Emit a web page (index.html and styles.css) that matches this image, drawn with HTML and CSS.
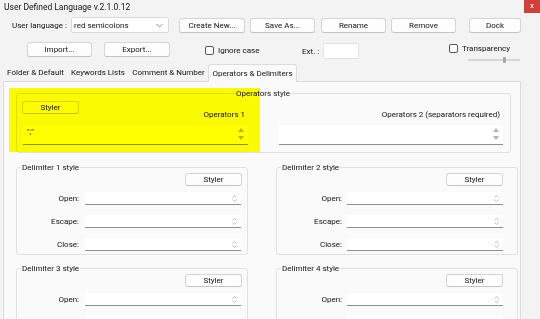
FILE: index.html
```html
<!DOCTYPE html>
<html lang="en">
<head>
    <meta charset="UTF-8">
    <meta name="viewport" content="width=device-width, initial-scale=1.0">
    <title>User Defined Language</title>
    <link rel="stylesheet" href="styles.css">
</head>
<body>
    <div class="window">
        <div class="titlebar">
            <span class="title">User Defined Language v.2.1.0.12</span>
            <span class="close">x</span>
        </div>

        <div class="row row-top">
            <span class="lang-label">User language :</span>
            <div class="select">
                <span>red semicolons</span>
                <svg width="7" height="5" viewBox="0 0 7 5"><polyline points="0.5,1 3.5,4 6.5,1" fill="none" stroke="#777" stroke-width="0.8"/></svg>
            </div>
            <button class="btn btn-create">Create New...</button>
            <button class="btn btn-save">Save As...</button>
            <button class="btn btn-rename">Rename</button>
            <button class="btn btn-remove">Remove</button>
            <button class="btn btn-dock">Dock</button>
        </div>

        <div class="row row-second">
            <button class="btn btn-import">Import...</button>
            <button class="btn btn-export">Export...</button>
            <label class="check ignore-case"><span class="box"></span>Ignore case</label>
            <span class="ext-label">Ext. :</span>
            <span class="ext-input"></span>
            <div class="transparency">
                <label class="check"><span class="box"></span>Transparency</label>
                <div class="slider"><span class="thumb"></span></div>
            </div>
        </div>

        <div class="tabs">
            <span class="tab tab-1">Folder &amp; Default</span>
            <span class="tab tab-2">Keywords Lists</span>
            <span class="tab tab-3">Comment &amp; Number</span>
            <span class="tab tab-4 active">Operators &amp; Delimiters</span>
        </div>

        <div class="panel">
            <div class="group ops">
                <div class="highlight"></div>
                <div class="group-title center"><span>Operators style</span></div>
                <div class="ops-cols">
                    <div class="ops-col">
                        <div class="ops-head">
                            <button class="btn btn-styler">Styler</button>
                            <span>Operators 1</span>
                        </div>
                        <div class="textarea">
                            <span class="value">";"</span>
                            <span class="spin"><i class="up"></i><i class="down"></i></span>
                        </div>
                    </div>
                    <div class="ops-col">
                        <div class="ops-head">
                            <span></span>
                            <span>Operators 2 (separators required)</span>
                        </div>
                        <div class="textarea">
                            <span class="value"></span>
                            <span class="spin"><i class="up"></i><i class="down"></i></span>
                        </div>
                    </div>
                </div>
            </div>

            <div class="delims">
                <div class="group delim">
                    <div class="delim-head">
                        <span class="delim-title">Delimiter 1 style</span>
                        <button class="btn btn-styler">Styler</button>
                    </div>
                    <div class="field"><span class="field-label">Open:</span><span class="input"><svg class="mini-spin" width="5" height="7" viewBox="0 0 5 7"><path d="M0.5 2.5 L2.5 0.5 L4.5 2.5 M0.5 4.5 L2.5 6.5 L4.5 4.5" fill="none" stroke="#b8b8b8" stroke-width="0.9"/></svg></span></div>
                    <div class="field"><span class="field-label">Escape:</span><span class="input"><svg class="mini-spin" width="5" height="7" viewBox="0 0 5 7"><path d="M0.5 2.5 L2.5 0.5 L4.5 2.5 M0.5 4.5 L2.5 6.5 L4.5 4.5" fill="none" stroke="#b8b8b8" stroke-width="0.9"/></svg></span></div>
                    <div class="field"><span class="field-label">Close:</span><span class="input"><svg class="mini-spin" width="5" height="7" viewBox="0 0 5 7"><path d="M0.5 2.5 L2.5 0.5 L4.5 2.5 M0.5 4.5 L2.5 6.5 L4.5 4.5" fill="none" stroke="#b8b8b8" stroke-width="0.9"/></svg></span></div>
                </div>
                <div class="group delim">
                    <div class="delim-head">
                        <span class="delim-title">Delimiter 2 style</span>
                        <button class="btn btn-styler">Styler</button>
                    </div>
                    <div class="field"><span class="field-label">Open:</span><span class="input"><svg class="mini-spin" width="5" height="7" viewBox="0 0 5 7"><path d="M0.5 2.5 L2.5 0.5 L4.5 2.5 M0.5 4.5 L2.5 6.5 L4.5 4.5" fill="none" stroke="#b8b8b8" stroke-width="0.9"/></svg></span></div>
                    <div class="field"><span class="field-label">Escape:</span><span class="input"><svg class="mini-spin" width="5" height="7" viewBox="0 0 5 7"><path d="M0.5 2.5 L2.5 0.5 L4.5 2.5 M0.5 4.5 L2.5 6.5 L4.5 4.5" fill="none" stroke="#b8b8b8" stroke-width="0.9"/></svg></span></div>
                    <div class="field"><span class="field-label">Close:</span><span class="input"><svg class="mini-spin" width="5" height="7" viewBox="0 0 5 7"><path d="M0.5 2.5 L2.5 0.5 L4.5 2.5 M0.5 4.5 L2.5 6.5 L4.5 4.5" fill="none" stroke="#b8b8b8" stroke-width="0.9"/></svg></span></div>
                </div>
                <div class="group delim">
                    <div class="delim-head">
                        <span class="delim-title">Delimiter 3 style</span>
                        <button class="btn btn-styler">Styler</button>
                    </div>
                    <div class="field"><span class="field-label">Open:</span><span class="input"><svg class="mini-spin" width="5" height="7" viewBox="0 0 5 7"><path d="M0.5 2.5 L2.5 0.5 L4.5 2.5 M0.5 4.5 L2.5 6.5 L4.5 4.5" fill="none" stroke="#b8b8b8" stroke-width="0.9"/></svg></span></div>
                    <div class="field"><span class="field-label" aria-label="Escape:"></span><span class="input"></span></div>
                </div>
                <div class="group delim">
                    <div class="delim-head">
                        <span class="delim-title">Delimiter 4 style</span>
                        <button class="btn btn-styler">Styler</button>
                    </div>
                    <div class="field"><span class="field-label">Open:</span><span class="input"><svg class="mini-spin" width="5" height="7" viewBox="0 0 5 7"><path d="M0.5 2.5 L2.5 0.5 L4.5 2.5 M0.5 4.5 L2.5 6.5 L4.5 4.5" fill="none" stroke="#b8b8b8" stroke-width="0.9"/></svg></span></div>
                    <div class="field"><span class="field-label" aria-label="Escape:"></span><span class="input"></span></div>
                </div>
            </div>
        </div>
    </div>
</body>
</html>
```

FILE: styles.css
```css
* {
    margin: 0;
    padding: 0;
    box-sizing: border-box;
    font-family: Roboto, "Noto Sans", sans-serif;
}
body {
    background: #f3f3f3;
    color: #111;
    font-size: 8px;
    overflow: hidden;
}
.window {
    width: 540px;
    height: 319px;
    overflow: hidden;
}
.titlebar {
    display: flex;
    justify-content: space-between;
    height: 14px;
    line-height: 14px;
}
.title {
    padding-left: 4px;
    font-size: 8.5px;
}
.close {
    width: 16px;
    height: 13px;
    line-height: 12px;
    background: #d0403a;
    color: #fff;
    text-align: center;
    font-size: 8px;
}
.row {
    display: flex;
}
.row-top {
    margin-top: 3px;
    height: 16px;
    padding-left: 12px;
    align-items: center;
}
.lang-label {
    width: 59px;
}
.select {
    width: 98px;
    height: 16px;
    background: #fff;
    border: 1px solid #dadada;
    border-radius: 2px;
    display: flex;
    justify-content: space-between;
    align-items: center;
    padding: 0 5px 0 2px;
}
.btn {
    height: 15px;
    background: #fdfdfd;
    border: 1px solid #d5d5d5;
    border-bottom-color: #c4c4c4;
    border-radius: 3px;
    font-size: 8px;
    color: #111;
    text-align: center;
}
.btn-create { width: 66px; margin-left: 10px; }
.btn-save { width: 65px; margin-left: 5px; }
.btn-rename { width: 65px; margin-left: 6px; }
.btn-remove { width: 65px; margin-left: 5px; }
.btn-dock { width: 52px; margin-left: 13px; }

.row-second {
    margin-top: 9px;
    height: 22px;
    align-items: flex-start;
}
.btn-import { width: 65px; margin-left: 27px; }
.btn-export { width: 66px; margin-left: 12px; }
.check {
    display: flex;
    align-items: center;
}
.check .box {
    width: 9px;
    height: 9px;
    border: 1px solid #555;
    border-radius: 2px;
    background: #fff;
    margin-right: 4px;
}
.ignore-case {
    width: 97px;
    height: 15px;
    margin-left: 35px;
    margin-top: 1px;
}
.ext-label {
    width: 21px;
    line-height: 17px;
    margin-top: 1px;
}
.ext-input {
    width: 36px;
    height: 16px;
    margin-top: 1px;
    background: #fff;
    border: 1px solid #e2e2e2;
    border-radius: 2px;
}
.transparency {
    margin-left: 90px;
    margin-top: 1px;
}
.transparency .check {
    height: 10px;
}
.slider {
    position: relative;
    width: 52px;
    height: 6px;
    margin: 4px 0 0 19px;
}
.slider::before {
    content: "";
    position: absolute;
    left: 0;
    right: 0;
    top: 2px;
    height: 2px;
    background: #d6d6d6;
}
.slider .thumb {
    position: absolute;
    left: 35px;
    top: 0;
    width: 3px;
    height: 6px;
    background: #a8a8a8;
    border-radius: 1px;
}

.tabs {
    display: flex;
    align-items: flex-end;
    height: 17px;
    padding-left: 4px;
}
.tab {
    height: 16px;
    line-height: 16px;
    text-align: center;
    white-space: nowrap;
}
.tab-1 { width: 63px; }
.tab-2 { width: 62px; }
.tab-3 { width: 79px; }
.tab-4 { width: 89px; }
.tab.active {
    position: relative;
    z-index: 1;
    height: 18px;
    line-height: 17px;
    margin-bottom: -1px;
    background: #fafafa;
    border: 1px solid #dcdcdc;
    border-bottom: none;
    border-radius: 3px 3px 0 0;
}

.panel {
    width: 518px;
    height: 250px;
    margin-left: 3px;
    background: #fafafa;
    border: 1px solid #dcdcdc;
    padding: 11px 0 0 12px;
}
.group {
    border: 1px solid #e1e1e1;
    border-radius: 3px;
}
.group-title span,
.delim-title {
    display: inline-block;
    background: #fafafa;
    line-height: 11px;
    padding: 0 1px;
}
.group-title {
    margin-top: -6px;
    height: 11px;
}
.group-title.center {
    text-align: center;
}

/* Operators style */
.ops {
    position: relative;
    width: 495px;
    height: 60px;
    padding: 0 7px 0 6px;
}
.highlight {
    position: absolute;
    left: -8px;
    top: -6px;
    width: 251px;
    height: 64px;
    background: #ffff00;
    mix-blend-mode: multiply;
    z-index: 2;
}
.ops-cols {
    display: flex;
    gap: 31px;
}
.ops-col:first-child {
    width: 225px;
}
.ops-col:last-child {
    width: 224px;
}
.ops-head {
    display: flex;
    justify-content: space-between;
    align-items: flex-end;
    height: 21px;
    padding-right: 3px;
}
.ops-head span {
    line-height: 10px;
}
.btn-styler {
    width: 57px;
    height: 13px;
    line-height: 11px;
}
.ops-head .btn-styler {
    margin-left: -1px;
    margin-bottom: 6px;
}
.textarea {
    display: flex;
    justify-content: space-between;
    height: 20px;
    margin-top: 5px;
    background: #fff;
    border-bottom: 1px solid #8f8f8f;
    padding: 2px 4px 0 4px;
}
.textarea .value {
    line-height: 10px;
}
.spin {
    display: flex;
    flex-direction: column;
    gap: 4px;
    padding-top: 1px;
}
.spin i {
    width: 0;
    height: 0;
    border-left: 3px solid transparent;
    border-right: 3px solid transparent;
}
.spin .up {
    border-bottom: 4px solid #b5b5b5;
}
.spin .down {
    border-top: 4px solid #b5b5b5;
}

/* Delimiters */
.delims {
    display: grid;
    grid-template-columns: 232px 242px;
    column-gap: 28px;
    row-gap: 13px;
    margin-top: 14px;
}
.delim {
    padding: 0 5px 3px 0;
}
.delim:nth-child(even) {
    padding-right: 14px;
}
.delim-head {
    display: flex;
    justify-content: space-between;
    align-items: flex-start;
    margin-top: -6px;
}
.delim-title {
    margin-left: 4px;
}
.delim-head .btn-styler {
    margin-top: 11px;
}
.field {
    display: flex;
    align-items: center;
    height: 13px;
    margin-top: 10px;
}
.delim-head + .field {
    margin-top: 6px;
}
.field-label {
    width: 62px;
    margin-right: 6px;
    text-align: right;
}
.delim:nth-child(even) .field-label {
    width: 65px;
    margin-right: 5px;
}
.input {
    position: relative;
    width: 156px;
    height: 13px;
    background: #fff;
    border-bottom: 1px solid #8f8f8f;
}
.mini-spin {
    position: absolute;
    right: 4px;
    top: 3px;
}
```
